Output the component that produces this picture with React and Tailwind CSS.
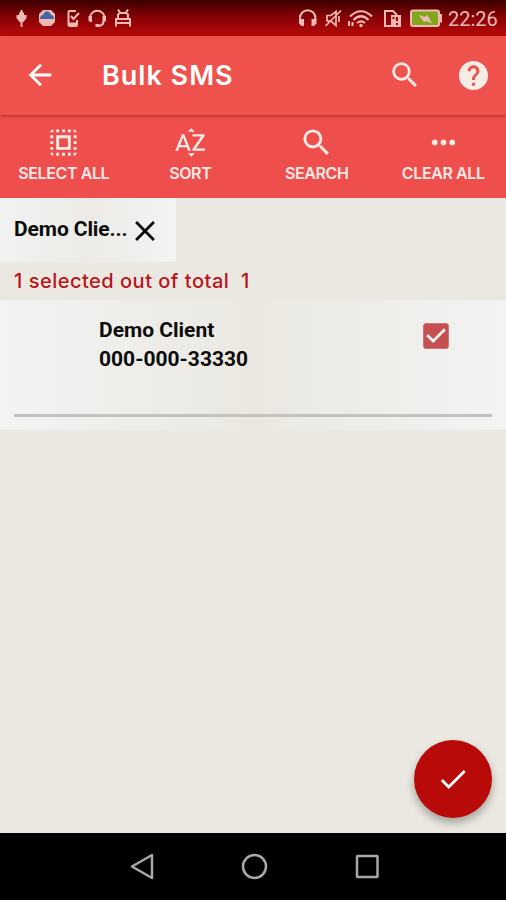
import {
  MdArrowBack, MdSearch, MdHelp, MdSelectAll, MdSortByAlpha, MdMoreHoriz,
  MdClose, MdCheckBox, MdCheck,
} from 'react-icons/md'

const actions = [
  { label: 'SELECT ALL', icon: MdSelectAll },
  { label: 'SORT', icon: MdSortByAlpha },
  { label: 'SEARCH', icon: MdSearch },
  { label: 'CLEAR ALL', icon: MdMoreHoriz },
]

const clients = [{ name: 'Demo Client', phone: '000-000-33330' }]

function StatusBar() {
  return (
    <div className="h-[36px] flex items-center justify-between bg-linear-to-b from-[#3d0000] via-[#8a0305] to-[#b90a0a] text-[#f0b9b5]">
      <svg className="w-[140px] h-[36px]" viewBox="0 0 140 36" fill="none" stroke="currentColor" strokeWidth="2">
        <path d="M21.500 10v17" />
        <path d="M16.500 15h2.500v-2l2.500-2 2.500 2v2h2.500v3l-3 4h-4l-3-4z" fill="currentColor" stroke="none" />
        <path d="M43 10h8l4 4v8l-4 4h-8l-4-4v-8z" fill="currentColor" stroke="none" />
        <path d="M40 18c0-2 2-3 3-3c2-5 6-5 8 0c2 0 3 2 3 4h-14z" fill="#3f67a8" stroke="none" />
        <path d="M77 20v5a1 1 0 0 1-1 1h-6.500a1 1 0 0 1-1-1V12a1 1 0 0 1 1-1h6.500M71 16l2.500 3l5.500-6" />
        <path d="M68.500 22.500h8.500v3h-8.500z" fill="currentColor" stroke="none" />
        <path d="M90 19v-1a7.300 7.300 0 0 1 14.600 0v1M103.500 21c0 3-2 5-6 5" />
        <path d="M88.500 16h3.500v6h-2l-1.500-1.500zM102.500 16h3.500v4.500l-1.500 1.500h-2zM95.500 24h4v3h-4z" fill="currentColor" stroke="none" />
        <path d="M118 18v-3.500l2-1.500h6l2 1.500v3.500M118 9.500l2.500 4M128 9.500l-2.500 4M115 19h16M115 23h16M116 18v8.500M130 18v8.500" />
      </svg>
      <div className="flex items-center pr-[8px]">
        <svg className="w-[154px] h-[36px]" viewBox="294 0 154 36" fill="none" stroke="currentColor" strokeWidth="2">
          <path d="M300 21v-3a7.700 7.700 0 0 1 15.400 0v3" />
          <path d="M299 19h5v7h-2.500l-2.500-2.500zM311.500 19h5v4.500l-2.500 2.500h-2.500z" fill="currentColor" stroke="none" />
          <path d="M327 15.500h4l5-4v14l-5-4.500h-4zM325.500 26l15.500-15.500M339 16v6" strokeWidth="1.700" />
          <path d="M350 16.500c7-7 15-7 22 0M353.500 20c5-5 10-5 15 0M357 23c3-2.500 5-2.500 8 0" strokeWidth="2.200" />
          <circle cx="361" cy="25.500" r="1.700" fill="currentColor" stroke="none" />
          <path d="M349 21v5M352.500 22v4" />
          <path d="M392 26h-7V11h8l4 4M385 19v-8" />
          <path d="M391 15h10v12h-10z" fill="currentColor" stroke="none" />
          <path d="M397 17v4M397 23v2M393.500 17v2" stroke="#9c0707" />
          <rect x="411" y="10.500" width="28" height="15.500" rx="2" fill="#82a71c" />
          <path d="M440.500 14v8.500" strokeWidth="3" />
          <path d="M419 15l6 2 2-2 5 8-6-2-2 1z" fill="currentColor" stroke="none" />
        </svg>
        <span className="w-[50px] text-[20px] leading-none pt-px">22:26</span>
      </div>
    </div>
  )
}

function Toolbar() {
  return (
    <div className="relative h-[79px] flex items-center pb-px pl-[23px] pr-[15px] bg-[#ef514c] text-white shadow-[0_1px_3px_rgba(90,20,20,0.5)]">
      <MdArrowBack className="size-[34px]" />
      <h1 className="flex-1 pl-[45px] font-[Inter] font-semibold text-[27px] leading-none tracking-[1px]">Bulk SMS</h1>
      <MdSearch className="size-[34px] mr-[34px] text-[#fbe9e5]" />
      <MdHelp className="size-[35px] text-[#f7ece6]" />
    </div>
  )
}

function ActionButton({ label, icon: Icon }) {
  return (
    <button className="flex flex-col items-center pt-[10px] pl-px text-[#fdeae7]">
      <Icon className="size-[35px]" />
      <span className="mt-[3px] font-[Inter] font-semibold text-[16px] leading-5 tracking-[-0.4px] whitespace-nowrap">{label}</span>
    </button>
  )
}

function ClientRow({ client }) {
  return (
    <div className="h-[130px] px-[14px] flex flex-col bg-linear-to-r from-[#f2f3f3] via-[#ebe8e1] to-[#f2f3f3]">
      <div className="flex justify-between pt-[15px] pl-[85px] pr-[39px] h-[114px]">
        <div className="pt-px font-bold text-[21px] leading-[29px] text-[#0c0c0c]">
          <p>{client.name}</p>
          <p>{client.phone}</p>
        </div>
        <MdCheckBox className="size-[34px] mt-[4px] text-[#c64f52]" />
      </div>
      <div className="h-[3px] bg-[#c2c1bf]" />
    </div>
  )
}

export default function App() {
  return (
    <div className="h-[900px] w-[506px] flex flex-col bg-[#ebe8e1] font-[Roboto,sans-serif] overflow-hidden">
      <StatusBar />
      <Toolbar />
      <div className="h-[83px] grid grid-cols-4 bg-[#ef4f4c]">
        {actions.map(a => (
          <ActionButton key={a.label} label={a.label} icon={a.icon} />
        ))}
      </div>

      <div className="w-[176px] h-[64px] pl-[14px] flex items-start bg-linear-to-r from-[#f1f2f2] via-[#ecebe7] to-[#f2f3f3]">
        <span className="w-[114px] pt-[17px] font-bold text-[21px] leading-[29px] tracking-[-0.1px] text-[#0c0c0c] whitespace-nowrap">Demo Clie...</span>
        <MdClose className="size-[34px] mt-[16px] text-[#0c0c0c]" />
      </div>
      <p className="h-[38px] pl-[14px] pt-[5px] font-[Inter] font-medium text-[20px] leading-[29px] tracking-[0.5px] text-[#b9141c] whitespace-pre">1 selected out of total  1</p>

      {clients.map(c => (
        <ClientRow key={c.phone} client={c} />
      ))}

      <div className="flex-1 flex items-end justify-end pr-[14px] pb-[15px]">
        <button className="size-[78px] rounded-full bg-[#b90a0a] text-white flex items-center justify-center shadow-[0_5px_8px_rgba(0,0,0,0.3)]">
          <MdCheck className="size-[34px]" />
        </button>
      </div>

      <nav className="h-[67px] bg-black text-[#a8a8a8]">
        <svg className="w-full h-full" viewBox="0 833 506 67" fill="none" stroke="currentColor" strokeWidth="2.500">
          <path d="M152 855v23l-20-11.500z" strokeLinejoin="round" />
          <circle cx="254.500" cy="866.500" r="11.500" />
          <rect x="357" y="856" width="20.500" height="21" rx="0.500" />
        </svg>
      </nav>
    </div>
  )
}
